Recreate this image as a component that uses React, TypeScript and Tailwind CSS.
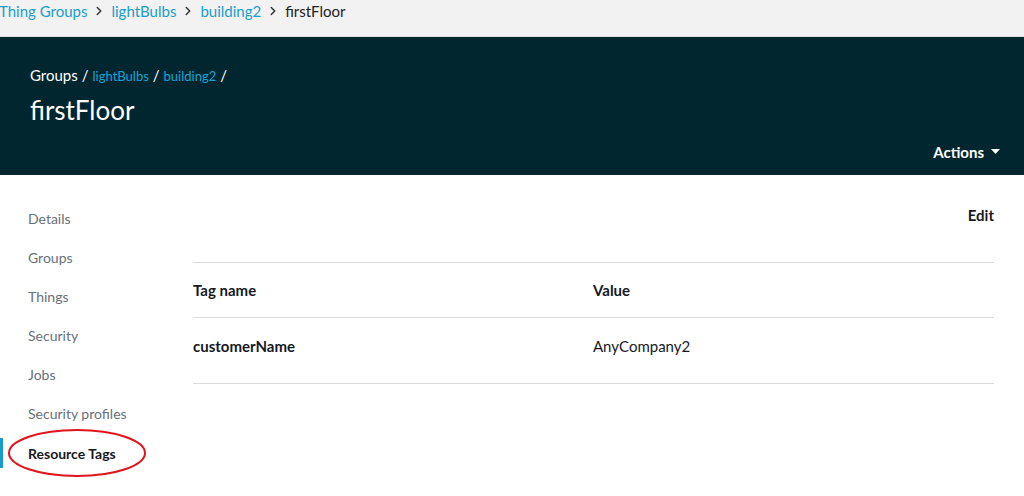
import { ChevronRight } from 'lucide-react';

const navItems = ['Details', 'Groups', 'Things', 'Security', 'Jobs', 'Security profiles'];

function App() {
  return (
    <div className="w-[1024px] h-[496px] overflow-hidden bg-white font-['Lato',sans-serif] text-[#16191f]">
      {/* top breadcrumb */}
      <div className="h-[37px] bg-[#f2f2f2] border-b border-[#dcdcdc] flex items-start pt-[1px] text-[15px] leading-[20px]">
        <div className="flex items-center -ml-[1px] gap-[5px]">
          <span className="text-[#1b9dc9]">Thing Groups</span>
          <ChevronRight size={14} strokeWidth={2.5} className="text-[#333]" />
          <span className="text-[#1b9dc9]">lightBulbs</span>
          <ChevronRight size={14} strokeWidth={2.5} className="text-[#333]" />
          <span className="text-[#1b9dc9]">building2</span>
          <ChevronRight size={14} strokeWidth={2.5} className="text-[#333]" />
          <span className="text-[#222]">firstFloor</span>
        </div>
      </div>

      {/* dark header */}
      <div className="h-[138px] bg-[#012630] px-[30px] pt-[28px] flex flex-col">
        <div className="flex items-baseline gap-[4px] text-[15px] leading-[20px] text-white">
          <span>Groups</span>
          <span>/</span>
          <span className="text-[#1aa4d2] text-[13px]">lightBulbs</span>
          <span>/</span>
          <span className="text-[#1aa4d2] text-[13px]">building2</span>
          <span>/</span>
        </div>
        <div className="text-white text-[26px] leading-[32px] mt-[8px]">firstFloor</div>
        <div className="mt-auto mb-[12px] flex justify-end items-center gap-[7px] -mr-[6px] text-white font-bold text-[15px]">
          <span>Actions</span>
          <svg width="9" height="5" viewBox="0 0 9 5"><path d="M0 0h9L4.5 5z" fill="white" /></svg>
        </div>
      </div>

      <div className="flex">
        {/* left nav */}
        <div className="w-[193px] shrink-0 pt-[33px] flex flex-col">
          {navItems.map((item) => (
            <div key={item} className="h-[39px] pl-[28px] flex items-start text-[14px] leading-[22px] text-[#687078]">
              {item}
            </div>
          ))}
          <div className="relative h-[30px] -mt-[4px] flex items-center">
            <div className="w-[3px] h-[30px] bg-[#1a9bcb]" />
            <span className="pl-[25px] text-[14px] font-bold text-[#16191f]">Resource Tags</span>
            <svg className="absolute left-[7px] -top-[10px]" width="140" height="50" viewBox="0 0 140 50">
              <ellipse cx="70" cy="25" rx="68" ry="23" fill="none" stroke="#e0141b" strokeWidth="2" />
            </svg>
          </div>
        </div>

        {/* main */}
        <div className="flex-1 pr-[30px]">
          <div className="flex justify-end pt-[29px] h-[88px] border-b border-[#dadada]">
            <span className="text-[15px] font-bold leading-[22px]">Edit</span>
          </div>
          <div className="flex h-[55px] items-center border-b border-[#dadada] text-[15px] font-bold">
            <div className="w-[400px]">Tag name</div>
            <div>Value</div>
          </div>
          <div className="flex h-[66px] items-start pt-[17px] border-b border-[#dadada] text-[15px]">
            <div className="w-[400px] font-bold">customerName</div>
            <div>AnyCompany2</div>
          </div>
        </div>
      </div>
    </div>
  );
}

export default App;
